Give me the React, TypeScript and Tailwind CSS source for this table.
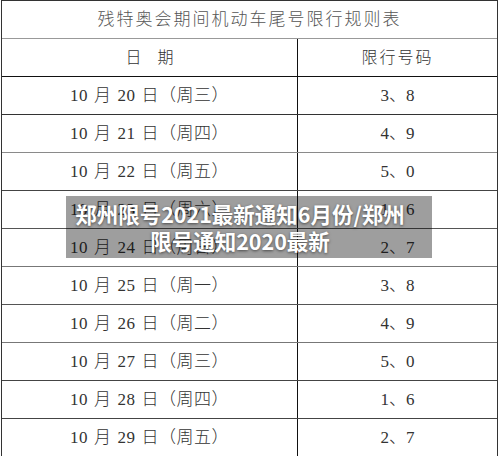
import React from "react";

const rows: [string, string, string][] = [
  ["20", "三", "3、8"],
  ["21", "四", "4、9"],
  ["22", "五", "5、0"],
  ["23", "六", "1、6"],
  ["24", "日", "2、7"],
  ["25", "一", "3、8"],
  ["26", "二", "4、9"],
  ["27", "三", "5、0"],
  ["28", "四", "1、6"],
  ["29", "五", "2、7"],
];

const lineColors = [
  "border-[#333]",
  "border-[#8a8a8a]",
  "border-[#444]",
  "border-[#555]",
  "border-[#777]",
  "border-[#555]",
  "border-[#777]",
  "border-[#444]",
  "border-[#444]",
  "border-[#555]",
];

export default function App() {
  return (
    <div
      className="relative w-[500px] h-[456px] overflow-hidden bg-white text-[#333]"
      style={{ fontFamily: '"Liberation Serif", "Noto Sans CJK SC", serif' }}
    >
      <div className="ml-[1px] w-[497px] border-x-[1.5px] border-t border-[#333]">
        <div className="h-[38px] flex items-center justify-center border-b-[1.5px] border-[#999] text-[17px] tracking-[2px] text-[#555] font-light">
          残特奥会期间机动车尾号限行规则表
        </div>
        <div className="h-[38px] grid grid-cols-[296px_1fr] border-b-[1.5px] border-[#111] font-light">
          <div className="flex items-center justify-center border-r-[1.5px] border-[#111] text-[16px]">
            日　期
          </div>
          <div className="flex items-center justify-center text-[16px] tracking-[2px]">
            限行号码
          </div>
        </div>
        {rows.map(([d, w, n], i) => (
          <div
            key={d}
            className={`h-[38px] grid grid-cols-[296px_1fr] border-b-[1.5px] ${lineColors[i]}`}
          >
            <div className="flex items-center justify-center border-r-[1.5px] border-[#111] text-[17px] tracking-[0.5px] font-light">
              <span>10</span>
              <span className="mx-[6px]">月</span>
              <span>{d}</span>
              <span className="ml-[6px]">日（周{w}）</span>
            </div>
            <div className="flex items-center justify-center text-[17px] font-light">
              {n}
            </div>
          </div>
        ))}
      </div>

      <div
        className="absolute left-[66px] top-[196px] w-[366px] h-[62px] bg-[rgba(0,0,0,0.38)] pl-[2px] pr-[20px] flex flex-col items-center justify-center text-white font-bold text-[21.5px] leading-[27px] [text-shadow:0_1px_3px_rgba(0,0,0,0.55)]"
        style={{ fontFamily: '"Noto Sans CJK SC", "Noto Sans", sans-serif' }}
      >
        <span>郑州限号2021最新通知6月份/郑州</span>
        <span>限号通知2020最新</span>
      </div>
    </div>
  );
}
